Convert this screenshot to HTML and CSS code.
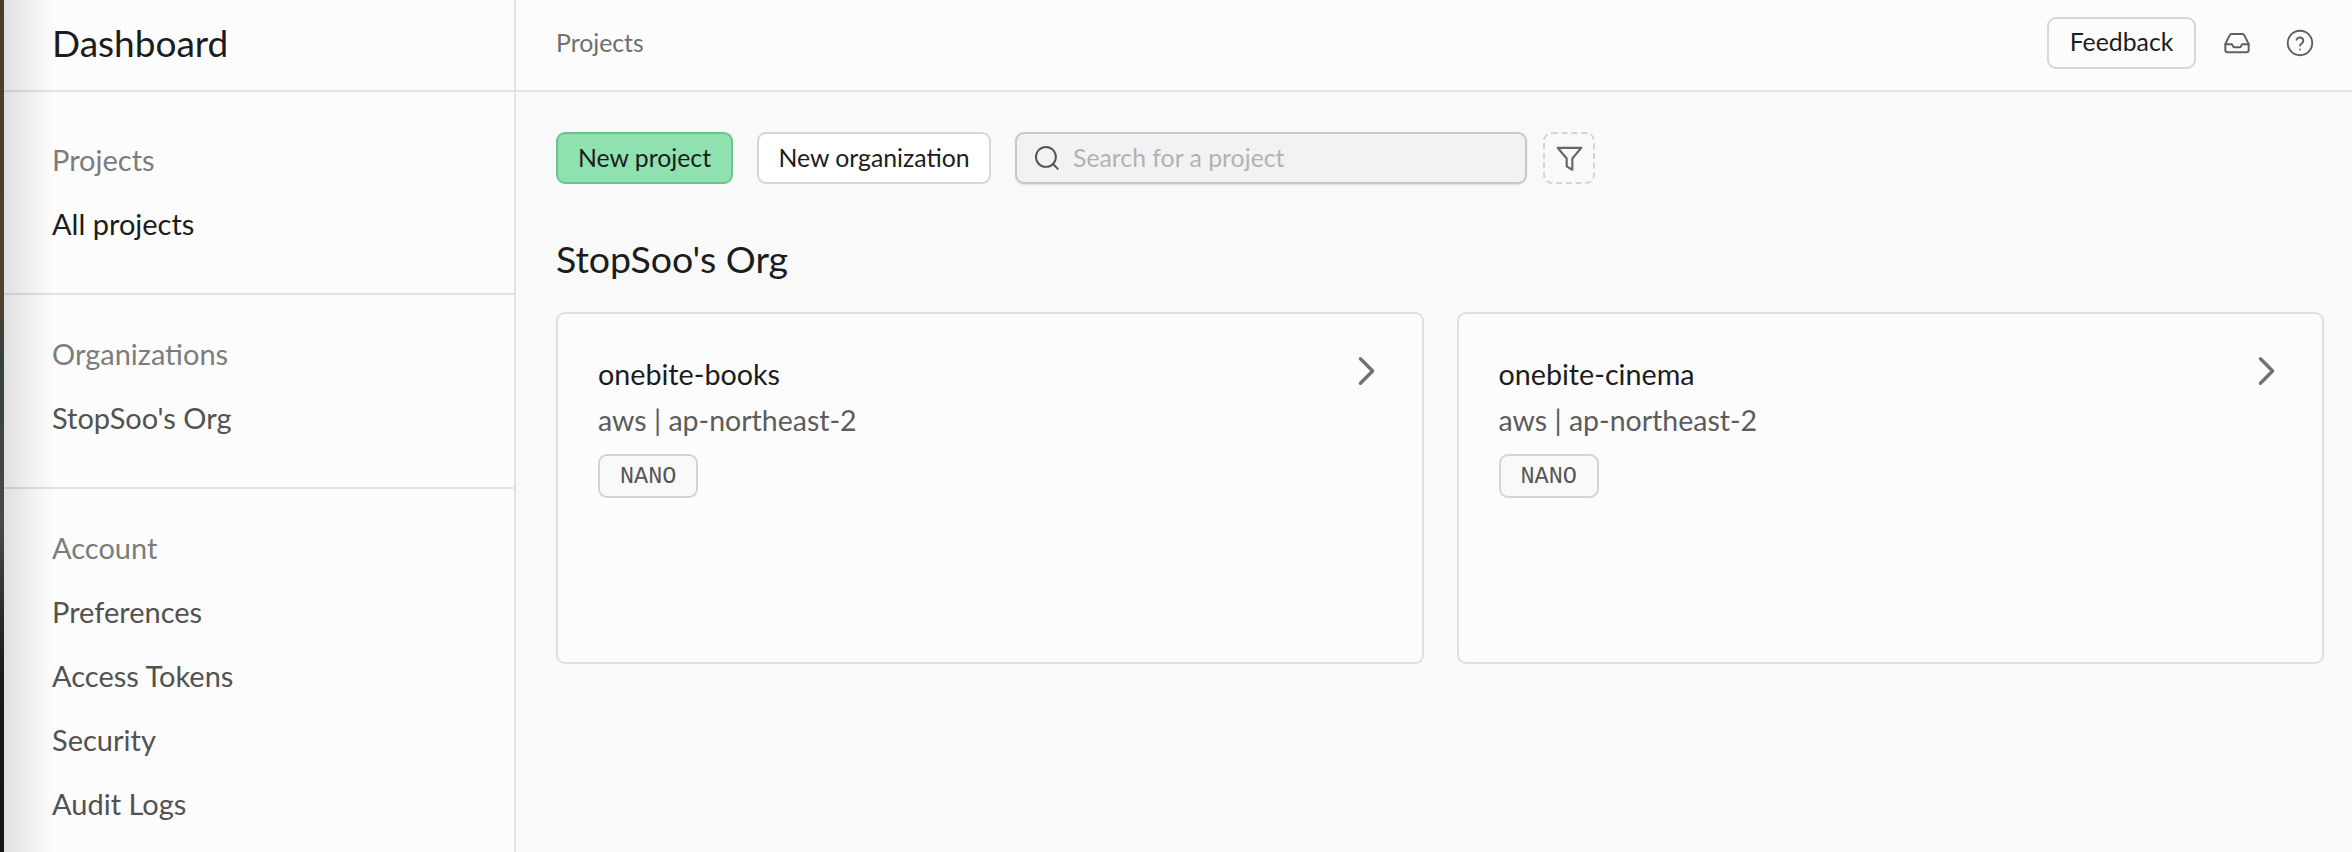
FILE: index.html
```html
<!DOCTYPE html>
<html lang="en">
<head>
<meta charset="utf-8">
<title>Dashboard</title>
<link rel="stylesheet" href="styles.css">
</head>
<body>
<div class="app">
  <div class="edge"></div>
  <aside class="sidebar">
    <div class="brand">Dashboard</div>
    <nav class="group first">
      <div class="group-title">Projects</div>
      <a class="item active">All projects</a>
    </nav>
    <nav class="group">
      <div class="group-title">Organizations</div>
      <a class="item">StopSoo's Org</a>
    </nav>
    <nav class="group last">
      <div class="group-title">Account</div>
      <a class="item">Preferences</a>
      <a class="item">Access Tokens</a>
      <a class="item">Security</a>
      <a class="item">Audit Logs</a>
    </nav>
  </aside>
  <main class="main">
    <header class="topbar">
      <span class="crumb">Projects</span>
      <div class="top-actions">
        <button class="btn feedback">Feedback</button>
        <svg class="icon-inbox" viewBox="0 0 24 24" fill="none" stroke="currentColor" stroke-width="1.7" stroke-linecap="round" stroke-linejoin="round"><path d="M2 13 5.6 5.4A2 2 0 0 1 7.4 4.2h9.2a2 2 0 0 1 1.8 1.2L22 13v5a2 2 0 0 1-2 2H4a2 2 0 0 1-2-2z"/><path d="M2 13h5.5l1.7 2.6h5.6l1.7-2.6H22"/></svg>
        <svg class="icon-help" viewBox="0 0 24 24" fill="none" stroke="currentColor" stroke-width="1.6" stroke-linecap="round" stroke-linejoin="round"><circle cx="12" cy="12" r="10.5"/><path d="M9 9.2a3 3 0 0 1 5.8 1c0 2-2.8 2.6-2.8 4"/><path d="M12 17.6h.01"/></svg>
      </div>
    </header>
    <section class="content">
      <div class="toolbar">
        <button class="btn primary">New project</button>
        <button class="btn secondary">New organization</button>
        <label class="search">
          <svg class="icon-search" viewBox="0 0 24 24" fill="none" stroke="currentColor" stroke-width="1.8" stroke-linecap="round"><circle cx="11" cy="11" r="9.2"/><path d="m18 18 4 4"/></svg>
          <span class="placeholder">Search for a project</span>
        </label>
        <button class="filter">
          <svg class="icon-filter" viewBox="0 0 24 24" fill="none" stroke="currentColor" stroke-width="1.9" stroke-linejoin="round"><path d="M1.5 2.5h21L14.5 12v10l-5-3v-7z"/></svg>
        </button>
      </div>
      <h2 class="org">StopSoo's Org</h2>
      <div class="cards">
        <article class="card">
          <div class="card-text">
            <div class="card-title">onebite-books</div>
            <div class="card-sub">aws | ap-northeast-2</div>
            <span class="badge">NANO</span>
          </div>
          <svg class="chevron" viewBox="0 0 20 32" fill="none" stroke="currentColor" stroke-width="3.6" stroke-linecap="round" stroke-linejoin="round"><path d="M3 3l13 13L3 29"/></svg>
        </article>
        <article class="card">
          <div class="card-text">
            <div class="card-title">onebite-cinema</div>
            <div class="card-sub">aws | ap-northeast-2</div>
            <span class="badge">NANO</span>
          </div>
          <svg class="chevron" viewBox="0 0 20 32" fill="none" stroke="currentColor" stroke-width="3.6" stroke-linecap="round" stroke-linejoin="round"><path d="M3 3l13 13L3 29"/></svg>
        </article>
      </div>
    </section>
  </main>
</div>
</body>
</html>
```

FILE: styles.css
```css
* { box-sizing: border-box; }
html, body { margin: 0; height: 100%; overflow: hidden; }
body { font-family: "Lato", "Liberation Sans", sans-serif; color: #1c1c1c; background: #f9f9f9; }
.app { display: flex; height: 852px; width: 2352px; }
.edge { width: 4px; flex: none; background: linear-gradient(180deg, #4a3a2c 0%, #4f4030 36%, #34403f 42%, #454a48 62%, #2a2c26 72%, #161c18 80%, #121512 100%); }
.sidebar { position: relative; width: 512px; flex: none; border-right: 2px solid #e2e2e2; background: #fcfcfc; display: flex; flex-direction: column; overflow: hidden; }
.sidebar::before { content: ""; position: absolute; left: 0; top: 0; bottom: 0; width: 52px; background: linear-gradient(90deg, rgba(0,0,0,.115) 0, rgba(0,0,0,.055) 24px, rgba(0,0,0,.01) 44px, transparent 52px); pointer-events: none; }
.brand { flex: none; height: 92px; padding: 0 0 6px 48px; display: flex; align-items: center; font-size: 37px; border-bottom: 2px solid #e2e2e2; color: #1c1c1c; }
.group { flex: none; padding: 39px 48px 49px; border-bottom: 2px solid #e2e2e2; display: flex; flex-direction: column; gap: 24px; }
.group.first { padding-top: 48px; }
.group.last { border-bottom: 0; }
.group-title { font-size: 29px; line-height: 40px; color: #7c7c7c; }
.item { font-size: 29px; line-height: 40px; color: #525252; }
.item.active { color: #1c1c1c; }
.main { flex: 1; min-width: 0; display: flex; flex-direction: column; }
.topbar { flex: none; height: 92px; padding: 0 36px 0 40px; border-bottom: 2px solid #e2e2e2; background: #fcfcfc; display: flex; align-items: center; justify-content: space-between; }
.crumb { font-size: 24.8px; color: #6f6f6f; margin-top: -6px; }
.top-actions { display: flex; align-items: center; margin-top: -5px; }
.btn { font-family: inherit; font-size: 24.8px; color: #1c1c1c; height: 52px; padding: 0 0 2px; border: 2px solid #d6d6d6; border-radius: 9px; background: #fff; white-space: nowrap; }
.btn.feedback { width: 149px; background: #fcfcfc; }
.icon-inbox { width: 28px; height: 28px; color: #5f5f5f; margin-left: 27px; }
.icon-help { width: 28px; height: 28px; color: #5f5f5f; margin-left: 35px; margin-right: 2px; }
.content { padding: 40px 28px 0 40px; }
.toolbar { display: flex; align-items: center; height: 52px; }
.btn.primary { width: 177px; background: #8fe1b0; border-color: #6cc58e; margin-right: 24px; }
.btn.secondary { width: 234px; margin-right: 24px; }
.search { width: 512px; height: 52px; display: flex; align-items: center; gap: 13px; padding: 0 17px; background: #f2f2f2; border: 2px solid #c8c8c8; border-radius: 9px; box-shadow: 0 1px 2px rgba(0,0,0,.1); }
.icon-search { width: 26px; height: 26px; color: #555; flex: none; }
.placeholder { font-size: 24.8px; color: #b2b2b2; padding-bottom: 1px; }
.filter { width: 52px; height: 52px; margin-left: 16px; border: 2px dashed #d4d4d4; border-radius: 9px; background: transparent; padding: 0; display: flex; align-items: center; justify-content: center; color: #666; }
.icon-filter { width: 27px; height: 27px; }
.org { margin: 50px 0 28px; font-size: 37.5px; line-height: 50px; font-weight: 400; color: #1c1c1c; }
.cards { display: grid; grid-template-columns: 1fr 1fr; gap: 33px; }
.card { height: 352px; background: #fcfcfc; border: 2px solid #dfdfdf; border-radius: 9px; padding: 40px 40px 0; display: flex; justify-content: space-between; align-items: flex-start; }
.card-title { font-size: 28.7px; line-height: 40px; color: #1c1c1c; }
.card-sub { font-size: 28.5px; line-height: 40px; color: #5c5c5c; margin-top: 6px; }
.badge { display: inline-flex; align-items: center; height: 44px; margin-top: 14px; padding: 0 20px; font-family: "Liberation Mono", monospace; font-size: 23.5px; color: #555; background: #f9f9f9; border: 2px solid #d4d4d4; border-radius: 9px; }
.chevron { width: 20px; height: 30px; color: #707070; margin: 2px 5px 0 0; }
```
